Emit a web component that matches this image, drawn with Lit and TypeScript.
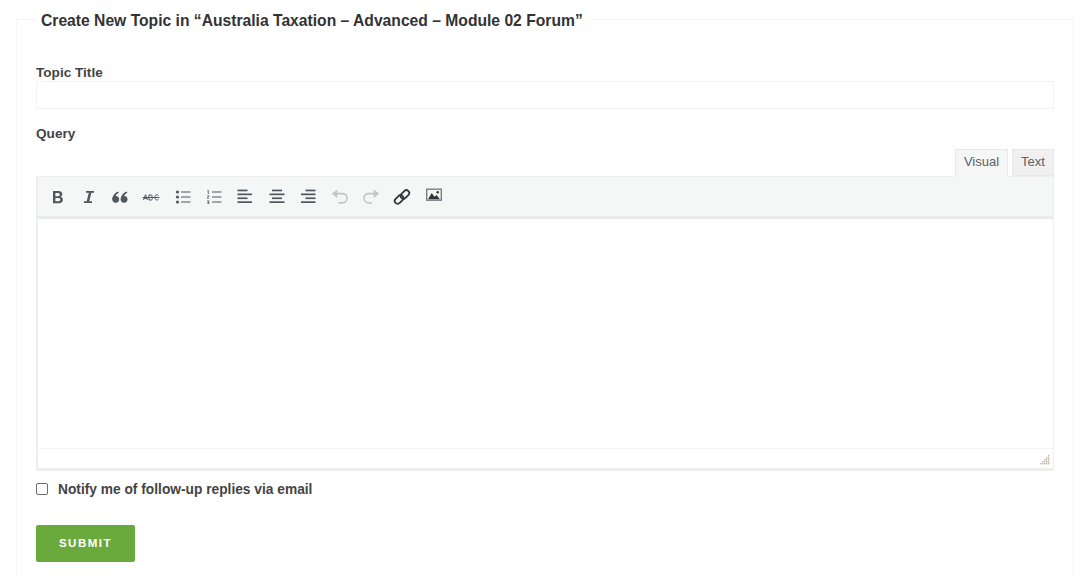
import { LitElement, html, css, svg } from "lit";
import { customElement } from "lit/decorators.js";

const gripCells: [number, number][] = [];
for (let y = 0; y < 10; y += 2) {
  for (let x = 8 - y; x < 10; x += 2) gripCells.push([x, y]);
}

const icons = [
  svg`<path d="M5 3h5.500c2.300 0 3.800 1.200 3.800 3.100 0 1.400-.8 2.300-1.900 2.700 1.500.3 2.500 1.400 2.500 3 0 2.100-1.600 3.400-4 3.400H5V3zm2.400 2v3.200h2.500c1.200 0 1.900-.6 1.900-1.600S11.100 5 9.900 5H7.400zm0 5.100v3.100h2.900c1.300 0 2-.6 2-1.600s-.8-1.500-2.100-1.500H7.400z" fill="#50575e"/>`,
  svg`<path d="M7 3h8v1.800h-2.600L10.300 13.200H13V15H5v-1.800h2.700L9.800 4.800H7V3z" fill="#50575e"/>`,
  svg`<g fill="#50575e"><circle cx="4.700" cy="11.300" r="3.400"/><path d="M1.300 11.300C1.300 7.800 3.500 5 7.200 3.500l.7 1.300C5.500 6 4.300 7.800 4.300 9.800z"/><circle cx="13.100" cy="11.300" r="3.400"/><path d="M9.700 11.300c0-3.500 2.200-6.300 5.900-7.800l.7 1.300c-2.400 1.200-3.600 3-3.600 5z"/></g>`,
  svg`<g fill="none" stroke="#50575e"><path d="M1.500 12 3.400 6.800h.2L5.500 12M2.200 10.500h2.600M7 6.800v5.200h1.900c1 0 1.500-.6 1.500-1.400 0-.7-.5-1.200-1.300-1.200.7 0 1.100-.4 1.100-1.200 0-.8-.5-1.200-1.400-1.200H7ZM16.500 7.700c-.4-.6-1-.9-1.600-.9-1.200 0-2 1-2 2.600s.8 2.600 2 2.600c.7 0 1.200-.3 1.600-.9" stroke-width="1"/><path d="M0.500 9.500h17" stroke-width="1"/></g>`,
  svg`<g fill="#50575e"><circle cx="3.500" cy="4" r="1.600"/><circle cx="3.500" cy="9" r="1.600"/><circle cx="3.500" cy="14" r="1.600"/><rect x="7" y="3.500" width="9.500" height="1"/><rect x="7" y="8.500" width="9.500" height="1"/><rect x="7" y="13.500" width="9.500" height="1"/></g>`,
  svg`<g fill="#50575e"><path d="M2.500 2.300h1.200v3.800h-.9V3.200l-.5.100zM2 7.600h2.300v.7c0 .6-1.400 1.200-1.400 1.700h1.500v.6H2v-.7c0-.6 1.400-1.100 1.400-1.600H2zM2 12.500h2.200v3.600H2v-.6h1.400v-.8H2.400v-.6h1v-.9H2z"/><rect x="7" y="3.500" width="9.500" height="1"/><rect x="7" y="8.500" width="9.500" height="1"/><rect x="7" y="13.500" width="9.500" height="1"/></g>`,
  svg`<g fill="#50575e"><rect x="1.500" y="1.600" width="10" height="1.700"/><rect x="1.500" y="5.500" width="14.500" height="1.700"/><rect x="1.500" y="9.400" width="10" height="1.700"/><rect x="1.500" y="13.300" width="14.500" height="1.700"/></g>`,
  svg`<g fill="#50575e"><rect x="4" y="1.600" width="10" height="1.700"/><rect x="1.500" y="5.500" width="15" height="1.700"/><rect x="4" y="9.400" width="10" height="1.700"/><rect x="1.500" y="13.300" width="15" height="1.700"/></g>`,
  svg`<g fill="#50575e"><rect x="6.500" y="1.600" width="10" height="1.700"/><rect x="2" y="5.500" width="14.500" height="1.700"/><rect x="6.500" y="9.400" width="10" height="1.700"/><rect x="2" y="13.300" width="14.500" height="1.700"/></g>`,
  svg`<path d="M4 5.700h7.500c2.500 0 4.500 1.800 4.500 4.500s-2 4.600-4.500 4.600H7.500" fill="none" stroke="#c3c5c7" stroke-width="1.700"/><path d="M.8 5.700 6.300 1.500v8.400z" fill="#c3c5c7"/>`,
  svg`<path d="M14 5.700H6.500C4 5.700 2 7.500 2 10.200s2 4.600 4.500 4.600h3.500" fill="none" stroke="#c3c5c7" stroke-width="1.700"/><path d="M17.200 5.700 11.700 1.500v8.400z" fill="#c3c5c7"/>`,
  svg`<g fill="none" stroke="#32373c" stroke-width="1.800"><rect x="1.200" y="8.600" width="9.800" height="5.800" rx="2.900" transform="rotate(-45 6.100 11.500)"/><rect x="7" y="3.600" width="9.800" height="5.800" rx="2.900" transform="rotate(-45 11.900 6.500)"/></g>`,
  svg`<g transform="translate(0 -2)"><rect x="1.700" y="3.200" width="14.600" height="11" fill="#f6f6f6" stroke="#6f767c" stroke-width="1.300"/><path d="M3 13.300 6.700 7 9.500 10.800 11.500 9 15 13.300z" fill="#32373c"/><circle cx="12.700" cy="6.200" r="1.300" fill="#32373c"/></g>`,
];

@customElement("app-root")
export class AppRoot extends LitElement {
  static styles = css`
    :host { display: block; height: 576px; overflow: hidden; background: #fff; font-family: "Liberation Sans", Arial, sans-serif; color: #3a3a3a; }
    .frame-wrap { padding-top: 10px; }
    .frame { margin: 0 6px 0 16px; height: 600px; box-sizing: border-box; padding: 0 19px; border: 1px solid #f5f5f5; min-width: 0; }
    legend { font-size: 15.660px; font-weight: 700; color: #333; padding: 2px 5px 0; line-height: 17px; }
    .label { display: block; font-size: 13.600px; font-weight: 700; line-height: 15px; color: #444; }
    .title-label { margin-top: 36px; }
    .title { display: block; width: 100%; box-sizing: border-box; height: 28px; margin-top: 1px; border: 1px solid #f3f3f3; background: #fff; padding: 0 6px; }
    .query-label { margin-top: 17px; }
    .tabs { display: flex; justify-content: flex-end; align-items: flex-end; gap: 4px; margin-top: 8px; height: 27px; position: relative; z-index: 1; }
    .tab { box-sizing: border-box; font-size: 13px; color: #5c6166; line-height: 20px; height: 27px; width: 42px; text-align: center; padding-top: 2px; border: 1px solid #e8e8e8; background: #f0f0f1; }
    .tab.on { width: 53px; background: #f5f6f6; border-bottom-color: #f5f6f6; height: 28px; margin-bottom: -1px; }
    .editor { border-style: solid; border-width: 1px 1px 3px 2px; border-color: #eeeeee; box-sizing: border-box; height: 295px; display: flex; flex-direction: column; background: #fff; }
    .bar { height: 42px; box-sizing: border-box; background: #f5f6f6; border-bottom: 3px solid #eaeaea; display: flex; align-items: flex-start; padding: 9px 0 0 10px; }
    .btn { width: 31.400px; height: 20px; flex: none; }
    .btn svg { width: 18px; height: 18px; display: block; margin-top: 2px; }
    .area { flex: 1; }
    .status { height: 19px; border-top: 1px solid #f3f3f3; position: relative; }
    .grip { position: absolute; right: 3px; bottom: 3px; width: 10px; height: 10px; }
    .check { display: flex; align-items: center; margin-top: 10px; height: 16px; gap: 10px; font-size: 13.750px; font-weight: 700; color: #444; }
    .check input { width: 12px; height: 12px; margin: 0; appearance: none; border: 1px solid #6b6b6b; border-radius: 2px; background: #fff; }
    .submit { display: flex; align-items: center; justify-content: center; margin-top: 28px; width: 99px; height: 37px; box-sizing: border-box; padding: 0 0 2px; background: #6aa93c; border: 0; border-radius: 2px; color: #fff; font: 700 11.500px "Liberation Sans", Arial, sans-serif; letter-spacing: 1.500px; }
  `;

  render() {
    return html`
      <div class="frame-wrap">
        <fieldset class="frame">
          <legend>Create New Topic in “Australia Taxation – Advanced – Module 02 Forum”</legend>
          <label class="label title-label">Topic Title</label>
          <input class="title" type="text" />
          <label class="label query-label">Query</label>
          <div class="tabs"><div class="tab on">Visual</div><div class="tab">Text</div></div>
          <div class="editor">
            <div class="bar">
              ${icons.map((p) => html`<span class="btn"><svg viewBox="0 0 18 18">${p}</svg></span>`)}
            </div>
            <div class="area"></div>
            <div class="status">
              <svg class="grip" viewBox="0 0 10 10"><g fill="#c4b5a6">${gripCells.map(([x, y]) => svg`<rect x=${x} y=${y} width="1.400" height="1.400"/>`)}</g></svg>
            </div>
          </div>
          <label class="check"><input type="checkbox" />Notify me of follow-up replies via email</label>
          <button class="submit">SUBMIT</button>
        </fieldset>
      </div>
    `;
  }
}
